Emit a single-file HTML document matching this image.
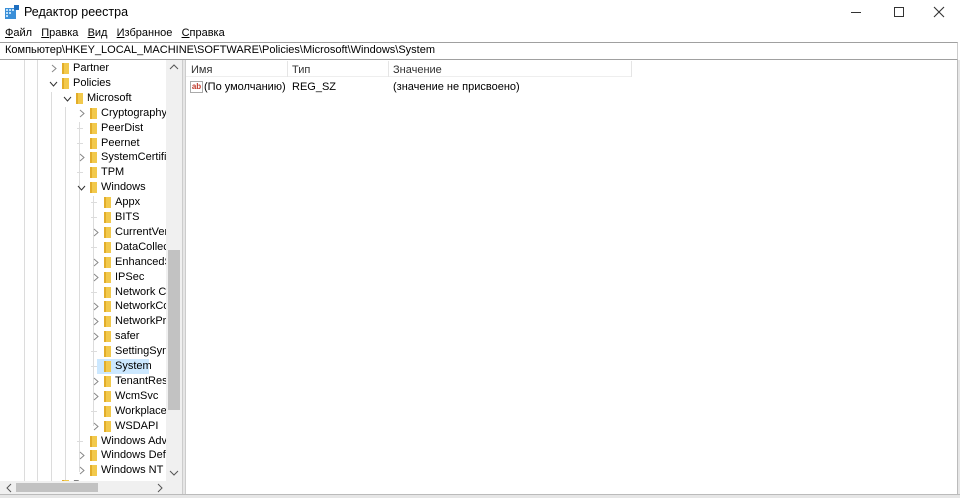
<!DOCTYPE html><html><head><meta charset="utf-8"><style>
*{margin:0;padding:0;box-sizing:border-box}
body{width:960px;height:498px;background:#fff;font-family:"Liberation Sans","DejaVu Sans",sans-serif;font-size:11px;color:#000;position:relative;overflow:hidden}
.a{position:absolute;white-space:nowrap}
.r{position:absolute;height:15px;line-height:15px;white-space:nowrap;overflow:hidden}
.f{position:absolute;width:7px;height:11px;background:#f2c94c;border-left:2px solid #e2ad2a}
.vl{position:absolute;border-left:1px solid #dcdcdc}
.hl{position:absolute;border-top:1px solid #dcdcdc;width:6px}
u{text-decoration:underline}
</style></head><body>
<svg class="a" style="left:5px;top:5px" width="14" height="14"><rect x="0" y="3" width="11" height="11" fill="#3a8fd8"/><g fill="#bfe0fa"><rect x="1" y="4" width="2" height="2"/><rect x="4" y="4" width="2" height="2"/><rect x="7" y="4" width="2" height="2"/><rect x="1" y="7" width="2" height="2"/><rect x="4" y="7" width="2" height="2"/><rect x="1" y="10" width="2" height="2"/></g><rect x="9" y="0" width="5" height="5" fill="#1e6fc0"/></svg>
<div class="a" style="left:24px;top:5px;font-size:12.5px">Редактор реестра</div>
<div class="a" style="left:851px;top:12px;width:10px;border-top:1px solid #333"></div>
<div class="a" style="left:894px;top:7px;width:10px;height:10px;border:1px solid #333"></div>
<svg class="a" style="left:933px;top:6px" width="12" height="12"><path d="M1 1L11 11M11 1L1 11" stroke="#333" stroke-width="1.1"/></svg>
<div class="a" style="left:5px;top:27px"><u>Ф</u>айл&nbsp;&nbsp; <u>П</u>равка&nbsp;&nbsp; <u>В</u>ид&nbsp;&nbsp; <u>И</u>збранное&nbsp;&nbsp; <u>С</u>правка</div>
<div class="a" style="left:0;top:42px;width:958px;height:18px;border-top:1px solid #a0a0a0;border-bottom:1px solid #a0a0a0;border-right:1px solid #ccc"></div>
<div class="a" style="left:5px;top:44px">Компьютер\HKEY_LOCAL_MACHINE\SOFTWARE\Policies\Microsoft\Windows\System</div>
<div class="vl" style="left:24px;top:60px;height:421px"></div>
<div class="vl" style="left:37px;top:60px;height:421px"></div>
<div class="vl" style="left:51px;top:92px;height:389px"></div>
<div class="vl" style="left:65px;top:107px;height:374px"></div>
<div class="vl" style="left:79px;top:122px;height:350px"></div>
<div class="vl" style="left:93px;top:196px;height:230px"></div>
<div id="tree"></div>
<div class="a" style="left:182px;top:60px;width:4px;height:436px;background:#e6e6e6;border-left:1px solid #ccc;border-right:1px solid #ccc"></div>
<div class="a" style="left:957px;top:60px;width:3px;height:438px;background:#e6e6e6;border-left:1px solid #bbb"></div>
<div class="a" style="left:0;top:494px;width:960px;height:4px;background:#e6e6e6;border-top:1px solid #bbb"></div>
<div class="a" style="left:166px;top:60px;width:16px;height:421px;background:#f0f0f0"></div>
<div class="a" style="left:168px;top:250px;width:12px;height:160px;background:#c2c2c2"></div>
<svg class="a" style="left:169px;top:63px" width="10" height="8"><path d="M1 6L5 2L9 6" fill="none" stroke="#555"/></svg>
<svg class="a" style="left:169px;top:469px" width="10" height="8"><path d="M1 2L5 6L9 2" fill="none" stroke="#555"/></svg>
<div class="a" style="left:0;top:481px;width:182px;height:13px;background:#f0f0f0"></div>
<div class="a" style="left:16px;top:483px;width:82px;height:9px;background:#c2c2c2"></div>
<svg class="a" style="left:5px;top:483px" width="8" height="10"><path d="M6 1L2 5L6 9" fill="none" stroke="#555"/></svg>
<svg class="a" style="left:156px;top:483px" width="8" height="10"><path d="M2 1L6 5L2 9" fill="none" stroke="#555"/></svg>
<div class="a" style="left:186px;top:60px;width:446px;height:17px;border-bottom:1px solid #eee"></div>
<div class="vl" style="left:287px;top:61px;height:16px;border-color:#e5e5e5"></div>
<div class="vl" style="left:388px;top:61px;height:16px;border-color:#e5e5e5"></div>
<div class="vl" style="left:631px;top:61px;height:16px;border-color:#e5e5e5"></div>
<div class="a" style="left:191px;top:64px;color:#333">Имя</div>
<div class="a" style="left:292px;top:64px;color:#333">Тип</div>
<div class="a" style="left:393px;top:64px;color:#333">Значение</div>
<div class="a" style="left:190px;top:81px;width:13px;height:12px;border:1px solid #aaa;background:#fff;color:#c0392b;font-size:8px;font-weight:bold;line-height:10px;text-align:center">ab</div>
<div class="a" style="left:204px;top:81px">(По умолчанию)</div>
<div class="a" style="left:292px;top:81px">REG_SZ</div>
<div class="a" style="left:393px;top:81px">(значение не присвоено)</div>
<script>
var rows=[
[1,'Partner','>'],[1,'Policies','v'],[2,'Microsoft','v'],[3,'Cryptography','>'],[3,'PeerDist',''],[3,'Peernet',''],[3,'SystemCertificates','>'],[3,'TPM',''],[3,'Windows','v'],
[4,'Appx',''],[4,'BITS',''],[4,'CurrentVersion','>'],[4,'DataCollection',''],[4,'EnhancedStorage','>'],[4,'IPSec','>'],[4,'Network Connections',''],[4,'NetworkConnectivity','>'],[4,'NetworkProvider','>'],[4,'safer','>'],[4,'SettingSync',''],[4,'System','s'],[4,'TenantRestrictions','>'],[4,'WcmSvc','>'],[4,'WorkplaceJoin',''],[4,'WSDAPI','>'],
[3,'Windows Advanced',''],[3,'Windows Defender','>'],[3,'Windows NT','>'],[1,'Razer','>']];
var h='';
rows.forEach(function(r,i){
 var y=61+i*14.9;var fx=48+14*r[0];var tx=fx+12;
 if(r[2]=='s')h+='<div class="a" style="left:97px;top:'+y+'px;width:52px;height:15px;background:#cce8ff"></div>';
 if(r[2]=='>'||r[2]=='v'){var ax=fx-13;h+='<svg class="a" style="left:'+ax+'px;top:'+(y+3)+'px" width="9" height="9"><path d="'+(r[2]=='>'?'M3 1L7 4.5L3 8':'M1 3L4.5 7L8 3')+'" fill="none" stroke="'+(r[2]=='v'?'#333':'#888')+'" stroke-width="1"/></svg>';}
 else h+='<div class="hl" style="left:'+(fx-13)+'px;top:'+(y+7)+'px"></div>';
 h+='<div class="f" style="left:'+fx+'px;top:'+(y+2)+'px"></div>';
 h+='<div class="r" style="left:'+(tx-1)+'px;top:'+y+'px;width:'+(167-tx)+'px">'+r[1]+'</div>';
});
document.getElementById('tree').innerHTML=h;
</script>
</body></html>
